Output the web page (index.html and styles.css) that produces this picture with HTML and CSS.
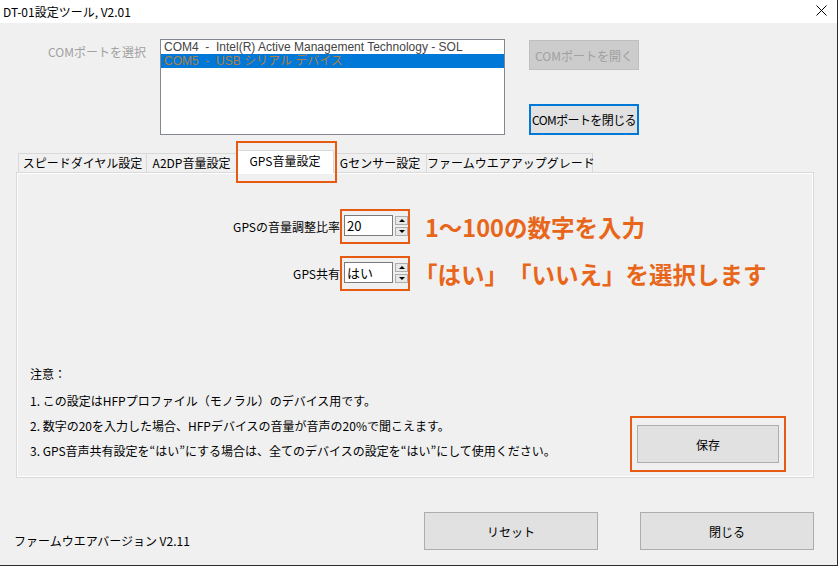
FILE: index.html
```html
<!DOCTYPE html>
<html lang="ja">
<head>
  <meta charset="UTF-8" />
  <title>DT-01設定ツール, V2.01</title>
  <link rel="stylesheet" href="styles.css">
</head>
<body>
  <div class="window">
    <div class="titlebar">
      <span class="title">DT-01設定ツール, V2.01</span>
      <span class="close-x">
        <svg width="11" height="11" viewBox="0 0 11 11"><path d="M0.5 0.5L10.5 10.5M10.5 0.5L0.5 10.5" stroke="#000" stroke-width="1" fill="none"/></svg>
      </span>
    </div>

    <div class="client">
      <!-- COMポート選択 -->
      <div class="port-row">
        <div class="port-label">COMポートを選択</div>
        <div class="listbox">
          <div class="list-item">COM4  -  Intel(R) Active Management Technology - SOL</div>
          <div class="list-item selected">COM5  -  USB シリアル デバイス</div>
        </div>
        <div class="port-buttons">
          <button type="button" class="btn btn-open">COMポートを開く</button>
          <button type="button" class="btn btn-close-port">COMポートを閉じる</button>
        </div>
      </div>

      <!-- タブ -->
      <div class="tabs">
        <div class="tab tab-speed">スピードダイヤル設定</div>
        <div class="tab tab-a2dp">A2DP音量設定</div>
        <div class="tab tab-gps active">GPS音量設定</div>
        <div class="tab tab-gsensor">Gセンサー設定</div>
        <div class="tab tab-firmware">ファームウエアアップグレード</div>
      </div>

      <div class="panel">
        <div class="fields">
          <div class="field-row">
            <label class="field-label">GPSの音量調整比率</label>
            <div class="spin">
              <div class="spin-input">20</div>
              <div class="spin-arrows">
                <span class="arrow up"></span>
                <span class="arrow down"></span>
              </div>
            </div>
            <div class="hint">1〜100の数字を入力</div>
          </div>
          <div class="field-row">
            <label class="field-label">GPS共有</label>
            <div class="spin">
              <div class="spin-input">はい</div>
              <div class="spin-arrows">
                <span class="arrow up"></span>
                <span class="arrow down"></span>
              </div>
            </div>
            <div class="hint hint-bracket">「はい」「いいえ」を選択します</div>
          </div>
        </div>

        <div class="panel-bottom">
          <div class="notes">
            <p class="notes-title">注意：</p>
            <p>1. この設定はHFPプロファイル（モノラル）のデバイス用です。</p>
            <p>2. 数字の20を入力した場合、HFPデバイスの音量が音声の20%で聞こえます。</p>
            <p>3. GPS音声共有設定を“はい”にする場合は、全てのデバイスの設定を“はい”にして使用ください。</p>
          </div>
          <div class="save-box">
            <button type="button" class="btn btn-save">保存</button>
          </div>
        </div>
      </div>

      <div class="footer">
        <span class="version">ファームウエアバージョン V2.11</span>
        <button type="button" class="btn btn-footer">リセット</button>
        <button type="button" class="btn btn-footer btn-exit">閉じる</button>
      </div>
    </div>
  </div>
</body>
</html>
```

FILE: styles.css
```css
body {
  margin: 0;
  font-family: "Noto Sans CJK JP", "Noto Sans", sans-serif;
  font-size: 12px;
  color: #000;
  background: #f0f0f0;
}
p {
  margin: 0;
}
.window {
  width: 838px;
  height: 566px;
  box-sizing: border-box;
  border-right: 1px solid #2b2b2b;
  border-bottom: 1px solid #2b2b2b;
  background: #f0f0f0;
}
.titlebar {
  height: 23px;
  background: #fff;
  display: flex;
  align-items: center;
  justify-content: space-between;
  padding-left: 3px;
}
.close-x {
  display: flex;
  margin-right: 10px;
  margin-top: -2px;
}

/* COMポート */
.port-row {
  display: flex;
  margin-top: 16px;
}
.port-label {
  width: 160px;
  box-sizing: border-box;
  padding: 5px 0 0 48px;
  color: #a0a0a0;
  line-height: 16px;
}
.listbox {
  width: 345px;
  height: 96px;
  box-sizing: border-box;
  border: 1px solid #828790;
  background: #fff;
}
.list-item {
  height: 14px;
  line-height: 14px;
  padding-left: 3px;
  white-space: pre;
  color: #444;
  font-family: "Liberation Sans", "Noto Sans CJK JP", sans-serif;
  font-size: 12px;
}
.list-item.selected {
  background: #0078d7;
  color: #b08040;
}
.port-buttons {
  display: flex;
  flex-direction: column;
  margin-left: 24px;
  width: 110px;
}
.btn {
  font-family: inherit;
  font-size: 12px;
  background: #e1e1e1;
  border: 1px solid #adadad;
  color: #000;
  padding: 0;
  box-sizing: border-box;
  white-space: nowrap;
}
.btn-open {
  margin-top: 1px;
  height: 30px;
  background: #cccccc;
  border-color: #bfbfbf;
  color: #a0a0a0;
}
.btn-close-port {
  margin-top: 34px;
  height: 31px;
  border: 2px solid #0078d7;
  letter-spacing: -0.6px;
}

/* タブ */
.tabs {
  display: flex;
  align-items: flex-end;
  height: 19px;
  margin-top: 18px;
  padding-left: 18px;
}
.tab {
  height: 19px;
  box-sizing: border-box;
  border: 1px solid #d9d9d9;
  border-bottom: none;
  margin-right: -1px;
  line-height: 18px;
  text-align: center;
  white-space: nowrap;
}
.tab-speed { width: 129px; }
.tab-a2dp { width: 91px; }
.tab-gps { width: 98px; }
.tab-gsensor { width: 94px; }
.tab-firmware { width: 167px; }
.tab.active {
  position: relative;
  z-index: 2;
  height: 23px;
  margin-bottom: -1px;
  background: #fff;
  line-height: 20px;
}
.tab.active::after {
  content: "";
  position: absolute;
  left: -1px;
  right: -4px;
  top: -10px;
  bottom: -10px;
  border: 2px solid #e65a12;
}

.panel {
  margin: 0 23px 0 16px;
  height: 306px;
  box-sizing: border-box;
  border: 1px solid #d9d9d9;
  box-shadow: inset 1px 1px 0 #fff, inset -1px -1px 0 #fff;
  display: flex;
  flex-direction: column;
}
.fields {
  display: flex;
  flex-direction: column;
  gap: 12px;
  padding-top: 36px;
}
.field-row {
  display: grid;
  grid-template-columns: 323px 70px auto;
  align-items: center;
}
.field-label {
  justify-self: end;
}
.spin {
  display: flex;
  width: 70px;
  height: 35px;
  box-sizing: border-box;
  border: 2px solid #e65a12;
  padding: 4px 0 0 2px;
}
.spin-input {
  width: 49px;
  height: 21px;
  box-sizing: border-box;
  border: 1px solid #7a7a7a;
  background: #fff;
  line-height: 19px;
  padding-left: 2px;
  font-size: 13px;
}
.spin-arrows {
  display: flex;
  flex-direction: column;
  gap: 2px;
  margin: 1px 0 0 2px;
}
.arrow {
  position: relative;
  width: 13px;
  height: 9px;
  box-sizing: border-box;
  border: 1px solid #adadad;
  background: #e8e8e8;
}
.arrow::before {
  content: "";
  position: absolute;
  left: 3px;
  top: 2px;
  border-left: 3px solid transparent;
  border-right: 3px solid transparent;
}
.arrow.up::before {
  border-bottom: 3px solid #000;
}
.arrow.down::before {
  border-top: 3px solid #000;
}
.hint {
  margin-left: 15px;
  font-size: 23.5px;
  font-weight: bold;
  color: #e8661a;
  line-height: 30px;
  white-space: nowrap;
  text-spacing-trim: space-all;
}
.hint-bracket {
  margin-left: 4px;
}

.panel-bottom {
  margin-top: auto;
  display: flex;
  justify-content: space-between;
  align-items: flex-end;
}
.notes {
  padding: 0 0 14px 13px;
  line-height: 25px;
}
.notes-title {
  margin-bottom: 2px;
}
.save-box {
  border: 2px solid #e65a12;
  padding: 7px 5px;
  margin: 0 27px 5px 0;
}
.btn-save {
  width: 142px;
  height: 38px;
}

.footer {
  display: flex;
  align-items: flex-end;
  margin-top: 34px;
  padding: 0 23px 0 14px;
}
.version {
  line-height: 16px;
  padding-bottom: 16px;
}
.btn-footer {
  width: 174px;
  height: 38px;
  margin-left: auto;
  margin-bottom: 15px;
}
.btn-exit {
  margin-left: 42px;
}
```
